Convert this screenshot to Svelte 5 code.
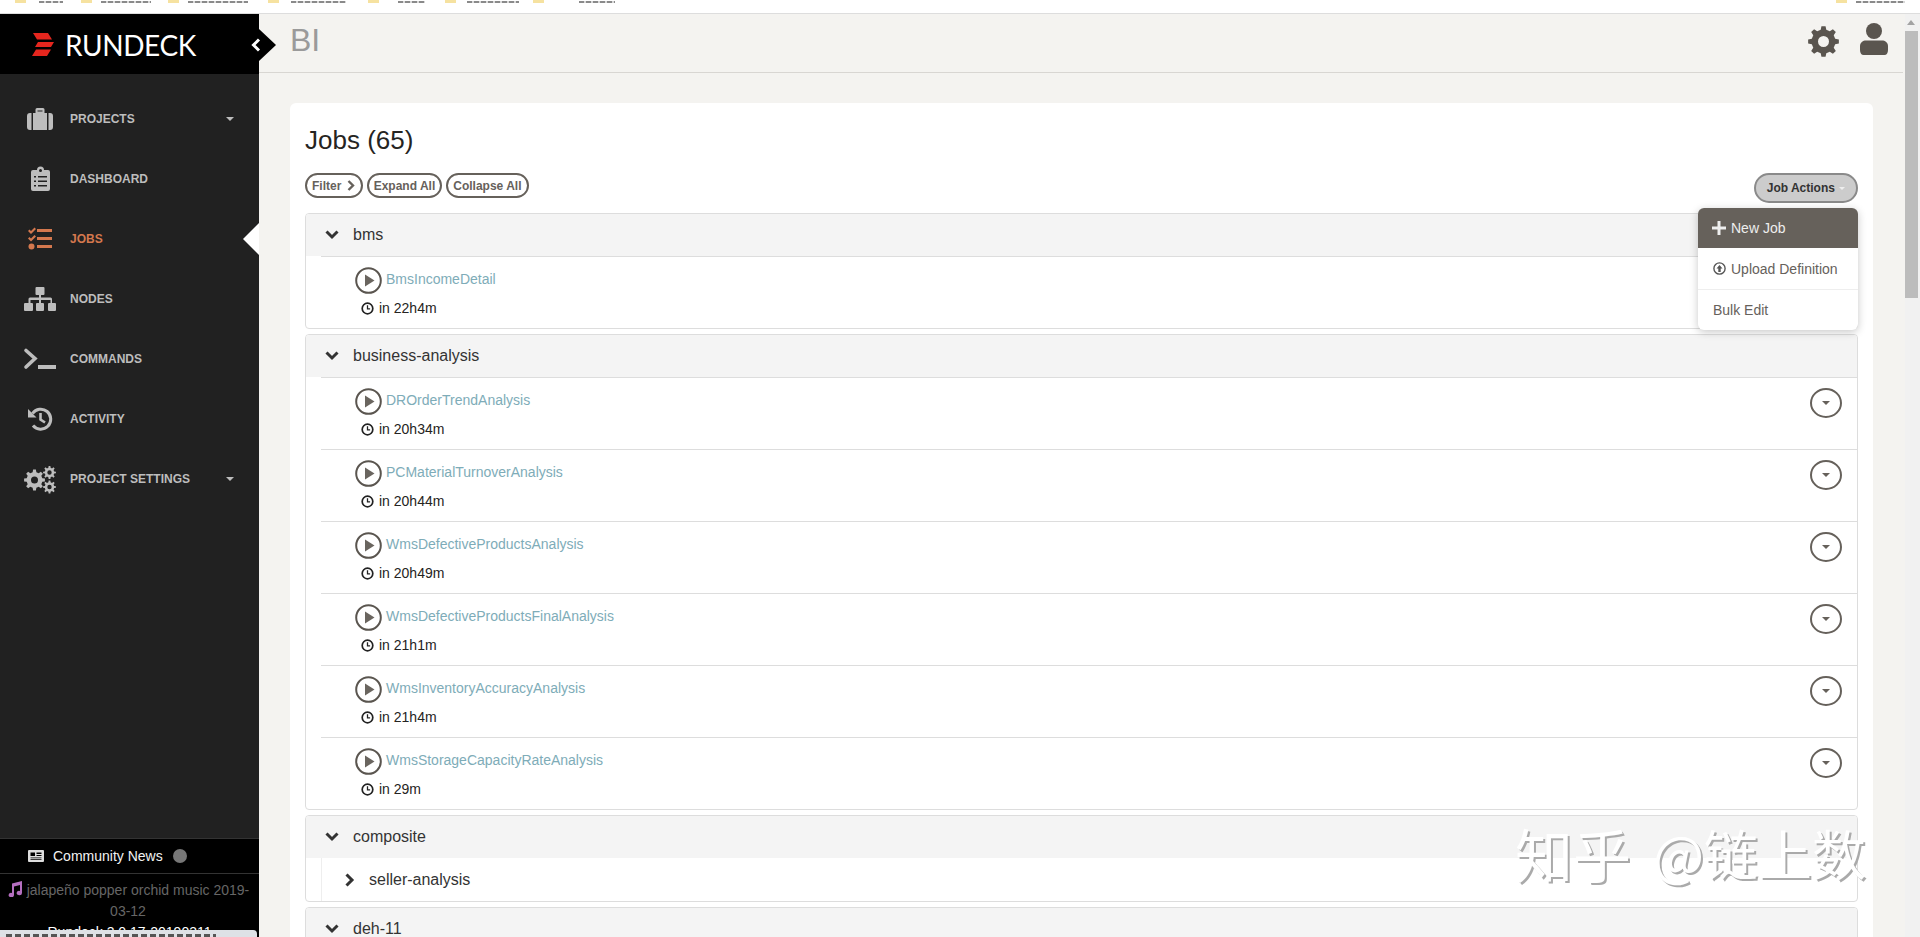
<script>
  const nav = [
    { label: 'PROJECTS', icon: 'briefcase', caret: true },
    { label: 'DASHBOARD', icon: 'clipboard' },
    { label: 'JOBS', icon: 'tasks', active: true },
    { label: 'NODES', icon: 'tree' },
    { label: 'COMMANDS', icon: 'terminal' },
    { label: 'ACTIVITY', icon: 'history' },
    { label: 'PROJECT SETTINGS', icon: 'cogs', caret: true }
  ]

  const groups = [
    { name: 'bms', jobs: [['BmsIncomeDetail', 'in 22h4m']] },
    {
      name: 'business-analysis',
      jobs: [
        ['DROrderTrendAnalysis', 'in 20h34m'],
        ['PCMaterialTurnoverAnalysis', 'in 20h44m'],
        ['WmsDefectiveProductsAnalysis', 'in 20h49m'],
        ['WmsDefectiveProductsFinalAnalysis', 'in 21h1m'],
        ['WmsInventoryAccuracyAnalysis', 'in 21h4m'],
        ['WmsStorageCapacityRateAnalysis', 'in 29m']
      ]
    },
    { name: 'composite', jobs: [], sub: 'seller-analysis' },
    { name: 'deh-11', jobs: [] }
  ]

  const bookmarks = [
    { x: 15, gap: 13, w: 24 }, { x: 81, gap: 9, w: 50 }, { x: 168, gap: 9, w: 60 },
    { x: 268, gap: 12, w: 55 }, { x: 368, gap: 19, w: 27 }, { x: 445, gap: 11, w: 52 },
    { x: 533, gap: 35, w: 36 }, { x: 1836, gap: 9, w: 49 }
  ]

  // cog outline with a round hole, teeth evenly spread
  function gear(cx, cy, outer, inner, hole, teeth) {
    const step = (Math.PI * 2) / teeth
    const pt = (r, a) => `${(cx + r * Math.cos(a)).toFixed(2)} ${(cy + r * Math.sin(a)).toFixed(2)}`
    let d = ''
    for (let i = 0; i < teeth; i++) {
      const a = i * step - Math.PI / 2
      d += `${i ? 'L' : 'M'}${pt(inner, a - step * 0.3)}L${pt(outer, a - step * 0.17)}L${pt(outer, a + step * 0.17)}L${pt(inner, a + step * 0.3)}`
    }
    d += `ZM${cx - hole} ${cy}a${hole} ${hole} 0 1 0 ${hole * 2} 0a${hole} ${hole} 0 1 0 ${-hole * 2} 0Z`
    return d
  }
</script>

<div class="page">
  <div class="bookmarks">
    {#each bookmarks as b}
      <span class="bookmark" style="left:{b.x}px; gap:{b.gap}px">
        <i class="folder"></i><i class="label" style="width:{b.w}px"></i>
      </span>
    {/each}
  </div>

  <div class="shell">
    <aside class="sidebar">
      <div class="logo">
        <svg class="mark" width="22" height="23" viewBox="0 0 22 23">
          <path d="M1 0h15l4 6.500H5zM6 9h16l-3 5H3zM4 16.500h15L15 23H0z" fill="#e5261e" />
        </svg>
        <span class="wordmark">RUNDECK</span>
        <span class="collapse">
          <svg width="12" height="16" viewBox="0 0 12 16">
            <path d="M9 2.500 3.500 8 9 13.500" fill="none" stroke="#fff" stroke-width="3" />
          </svg>
        </span>
      </div>

      <nav class="nav">
        {#each nav as item}
          <div class="nav-item" class:active={item.active}>
            <svg class="nav-icon" width="34" height="30" viewBox="0 0 34 30" fill="currentColor">
              {#if item.icon === 'briefcase'}
                <path d="M7 9h1.500v17H7a3 3 0 0 1-3-3V12a3 3 0 0 1 3-3zM25.500 9H27a3 3 0 0 1 3 3v11a3 3 0 0 1-3 3h-1.500z" />
                <path fill-rule="evenodd" d="M10 9h2.500V5.500A1.500 1.500 0 0 1 14 4h6a1.500 1.500 0 0 1 1.500 1.500V9H24v17H10zM14.500 6.500v1h5v-1z" />
              {:else if item.icon === 'clipboard'}
                <path fill-rule="evenodd" d="M10 6h4a3.500 3.500 0 0 1 7 0h4a2 2 0 0 1 2 2v17a2 2 0 0 1-2 2H10a2 2 0 0 1-2-2V8a2 2 0 0 1 2-2zM16 6.500a1.500 1.500 0 1 0 3 0 1.500 1.500 0 0 0-3 0zM11 12v1.500h2V12zm4 0v1.500h9V12zm-4 4.500V18h2v-1.500zm4 0V18h9v-1.500zM11 21v1.500h2V21zm4 0v1.500h9V21z" />
              {:else if item.icon === 'tasks'}
                <path d="M5 7l1.500-1.500L8 7l3.500-3.500L13 5l-5 5zM5 14.500 6.500 13 8 14.500l3.500-3.500 1.500 1.500-5 5zM14 5h15v3H14zM14 13h15v3H14zM14 21h15v3H14z" />
                <circle cx="8.500" cy="22.500" r="3" />
              {:else if item.icon === 'tree'}
                <path d="M13.500 3h7a1 1 0 0 1 1 1v6a1 1 0 0 1-1 1H18v2.500h9.500a1.500 1.500 0 0 1 1.500 1.500v4h3a1 1 0 0 1 1 1v6a1 1 0 0 1-1 1h-6a1 1 0 0 1-1-1v-6a1 1 0 0 1 1-1h1.500v-3H18v3h2a1 1 0 0 1 1 1v6a1 1 0 0 1-1 1h-6a1 1 0 0 1-1-1v-6a1 1 0 0 1 1-1h2v-3H7.500v3H9a1 1 0 0 1 1 1v6a1 1 0 0 1-1 1H2a1 1 0 0 1-1-1v-6a1 1 0 0 1 1-1h3.500v-4A1.500 1.500 0 0 1 7 13.500h9V11h-2.500a1 1 0 0 1-1-1V4a1 1 0 0 1 1-1z" />
              {:else if item.icon === 'terminal'}
                <path d="M3 6.500 12 14.500 3 23" fill="none" stroke="currentColor" stroke-width="3.600" stroke-linecap="round" />
                <path d="M15 21h18v4H15z" />
              {:else if item.icon === 'history'}
                <path d="M9.500 9.500A10 10 0 1 1 10 21.500" fill="none" stroke="currentColor" stroke-width="3" />
                <path d="M5 5v8.500h8.500z" />
                <path d="M17.500 9v6.500l4.500 3" fill="none" stroke="currentColor" stroke-width="2.600" />
              {:else if item.icon === 'cogs'}
                <path fill-rule="evenodd" d={gear(11.5, 16, 10.5, 8, 3.5, 8)} />
                <path fill-rule="evenodd" d={gear(26.5, 8.500, 6.5, 4.8, 2.2, 8)} />
                <path fill-rule="evenodd" d={gear(26.5, 23, 6.5, 4.8, 2.2, 8)} />
              {/if}
            </svg>
            <span class="nav-label">{item.label}</span>
            {#if item.caret}<i class="nav-caret"></i>{/if}
            {#if item.active}<i class="nav-notch"></i>{/if}
          </div>
        {/each}
      </nav>

      <div class="foot">
        <div class="news">
          <svg width="16" height="12" viewBox="0 0 16 12">
            <path fill-rule="evenodd" d="M1 0h14a1 1 0 0 1 1 1v10a1 1 0 0 1-1 1H1a1 1 0 0 1-1-1V1a1 1 0 0 1 1-1zm1.500 2.500v3.500H7V2.500zm6 0V4h5V2.500zm0 2.500v1h5V5zm-6 2.500v.800h11v-.800zm0 1.800v.700h11v-.700z" fill="#ddd" />
          </svg>
          <span>Community News</span>
          <i class="news-dot"></i>
        </div>
        <div class="release">
          <svg width="16" height="16" viewBox="0 0 16 16">
            <path d="M5 2.500 15 0v12a2.700 2.200 0 1 1-2-2.100V4L7 5.500V14a2.700 2.200 0 1 1-2-2.100z" fill="#b56fc0" />
          </svg>
          jalapeño popper orchid music 2019-03-12
        </div>
        <div class="version">Rundeck 3.0.17-20190311</div>
      </div>
    </aside>

    <main class="main">
      <header class="topbar">
        <h1>BI</h1>
        <div class="top-icons">
          <svg class="top-gear" width="31" height="31" viewBox="0 0 31 31">
            <path fill="#5a554f" fill-rule="evenodd" d={gear(15.5, 15.5, 15.5, 12, 5.5, 8)} />
          </svg>
          <svg width="28" height="32" viewBox="0 0 28 32">
            <circle cx="14" cy="8" r="8" fill="#5a554f" />
            <path d="M0 27v-4c0-3.500 3-5.500 6-5.500h16c3 0 6 2 6 5.500v4c0 3-1.500 5-3.500 5h-21C1.500 32 0 30 0 27z" fill="#5a554f" />
          </svg>
        </div>
      </header>

      <section class="card">
        <h2>Jobs (65)</h2>
        <div class="toolbar">
          <button class="pill">Filter <svg class="filter-chev" width="8" height="11" viewBox="0 0 8 11"><path d="M1.500 1 6 5.500 1.500 10" fill="none" stroke="#66615b" stroke-width="2.400" /></svg></button>
          <button class="pill">Expand All</button>
          <button class="pill">Collapse All</button>
          <div class="actions">
            <button class="pill action-btn">Job Actions <i class="action-caret"></i></button>
            <div class="menu">
              <div class="menu-item primary">
                <svg class="plus" width="14" height="14" viewBox="0 0 14 14"><path d="M5.500 0h3v5.500H14v3H8.500V14h-3V8.500H0v-3h5.500z" fill="#eee" /></svg>
                New Job
              </div>
              <div class="menu-item">
                <svg width="13" height="13" viewBox="0 0 13 13">
                  <circle cx="6.500" cy="6.500" r="5.600" fill="none" stroke="#555" stroke-width="1.400" />
                  <path d="M6.500 3 9.500 6.500H7.700V10H5.300V6.500H3.500z" fill="#555" />
                </svg>
                Upload Definition
              </div>
              <div class="menu-item">Bulk Edit</div>
            </div>
          </div>
        </div>

        {#each groups as group}
          <div class="group">
            <div class="group-head">
              <svg class="chev" width="14" height="10" viewBox="0 0 14 10"><path d="M1.500 1.500 7 7l5.500-5.500" fill="none" stroke="#333" stroke-width="3" /></svg>
              <span>{group.name}</span>
            </div>
            {#each group.jobs as job}
              <div class="job">
                <div class="job-text">
                  <div class="job-title">
                    <svg width="27" height="27" viewBox="0 0 27 27">
                      <circle cx="13.500" cy="13.500" r="12.300" fill="none" stroke="#5a554f" stroke-width="2" />
                      <path d="M10 7.500 19.500 13.500 10 19.500z" fill="#6a655f" />
                    </svg>
                    <span class="job-link">{job[0]}</span>
                  </div>
                  <div class="job-time">
                    <svg width="13" height="13" viewBox="0 0 13 13">
                      <circle cx="6.500" cy="6.500" r="5.300" fill="none" stroke="#222" stroke-width="1.700" />
                      <path d="M6.500 3.200v3.600h2.600" fill="none" stroke="#222" stroke-width="1.300" />
                    </svg>
                    {job[1]}
                  </div>
                </div>
                <button class="job-menu"><i></i></button>
              </div>
            {/each}
            {#if group.sub}
              <div class="sub">
                <svg width="10" height="14" viewBox="0 0 10 14"><path d="M1.500 1.500 7 7l-5.500 5.500" fill="none" stroke="#333" stroke-width="3" /></svg>
                <span>{group.sub}</span>
              </div>
            {/if}
          </div>
        {/each}
      </section>

      <div class="watermark"><span class="wm-a">知乎</span><span class="wm-at">@</span><span class="wm-b">链上数</span></div>
    </main>

    <div class="scrollbar">
      <i class="scroll-up"></i>
      <i class="scroll-thumb"></i>
    </div>
  </div>

  <div class="status"><i></i></div>
</div>

<style>
  :global(body) {
    margin: 0;
    background: #fff;
    font-family: 'Liberation Sans', Arial, sans-serif;
    overflow: hidden;
  }

  :global(*) {
    box-sizing: border-box;
  }

  .page {
    position: relative;
    height: 937px;
    overflow: hidden;
    display: flex;
    flex-direction: column;
  }

  .bookmarks {
    position: relative;
    flex: 0 0 14px;
    border-bottom: 1px solid #ddd;
    overflow: hidden;
    background: #fff;
  }

  .bookmark {
    position: absolute;
    top: -10px;
    display: flex;
    align-items: flex-end;
    height: 13px;
  }

  .folder {
    display: block;
    width: 11px;
    height: 13px;
    background: #f6e2a0;
  }

  .label {
    display: block;
    height: 2px;
    background: repeating-linear-gradient(90deg, #8a8a8a 0 5px, #d8d8d8 5px 7px);
  }

  .shell {
    flex: 1;
    display: flex;
    min-height: 0;
    background: #f4f3f0;
  }

  .sidebar {
    position: relative;
    flex: 0 0 259px;
    display: flex;
    flex-direction: column;
    background: #212121;
    z-index: 2;
  }

  .logo {
    position: relative;
    flex: 0 0 60px;
    display: flex;
    align-items: center;
    padding-left: 32px;
    background: #000;
    color: #fff;
  }

  .mark {
    margin-right: 11px;
  }

  .wordmark {
    font-family: Lato, sans-serif;
    font-size: 28px;
    letter-spacing: -0.4px;
    line-height: 1;
    margin-top: 2px;
  }

  .collapse {
    position: absolute;
    left: 259px;
    top: 15px;
    width: 0;
    height: 0;
    border-style: solid;
    border-width: 16px 0 16px 17px;
    border-color: transparent transparent transparent #000;
  }

  .collapse svg {
    position: absolute;
    left: -26px;
    top: -8px;
  }

  .nav {
    flex: 1;
    min-height: 0;
    padding-top: 15px;
  }

  .nav-item {
    position: relative;
    height: 60px;
    display: flex;
    align-items: center;
    color: #bdbdbd;
    padding-left: 23px;
  }

  .nav-item.active {
    color: #d4784e;
  }

  .nav-icon {
    flex: 0 0 34px;
  }

  .nav-label {
    margin-left: 13px;
    font-size: 12px;
    font-weight: 700;
  }

  .nav-caret {
    position: absolute;
    left: 226px;
    top: 28px;
    border-style: solid;
    border-width: 4px 4px 0;
    border-color: #bdbdbd transparent transparent;
  }

  .nav-notch {
    position: absolute;
    right: 0;
    top: 14px;
    border-style: solid;
    border-width: 16px 16px 16px 0;
    border-color: transparent #fff transparent transparent;
  }

  .foot {
    flex: 0 0 99px;
    background: #000;
    color: #fff;
    overflow: hidden;
    border-top: 1px solid #333;
  }

  .news {
    height: 35px;
    display: flex;
    align-items: center;
    gap: 9px;
    padding-left: 28px;
    font-size: 14px;
    color: #f2f2f2;
    border-bottom: 1px solid #333;
  }

  .news-dot {
    width: 14px;
    height: 14px;
    border-radius: 50%;
    background: #777;
    margin-left: 1px;
  }

  .release {
    margin-top: 6px;
    padding: 0 6px 0 3px;
    text-align: center;
    font-size: 14px;
    line-height: 21px;
    color: #666;
  }

  .release svg {
    vertical-align: -2px;
  }

  .version {
    text-align: center;
    font-size: 14px;
    line-height: 20px;
    color: #fff;
  }

  .main {
    position: relative;
    flex: 1;
    min-width: 0;
    overflow: hidden;
  }

  .topbar {
    height: 59px;
    margin-right: 2px;
    border-bottom: 1px solid #d8d6d2;
    display: flex;
    align-items: center;
    justify-content: space-between;
    padding: 0 15px 6px 31px;
  }

  h1 {
    margin: 0;
    font-size: 32px;
    font-weight: 400;
    color: #9a9a9a;
  }

  .top-icons {
    display: flex;
    align-items: flex-start;
    gap: 21px;
  }

  .top-gear {
    margin-top: 3px;
  }

  .card {
    margin: 30px 32px 0 31px;
    padding: 18px 15px 0;
    background: #fff;
    border-radius: 6px;
    height: 900px;
  }

  h2 {
    margin: 0;
    font-size: 26px;
    line-height: 38px;
    font-weight: 400;
    color: #252422;
  }

  .toolbar {
    position: relative;
    display: flex;
    align-items: flex-start;
    gap: 4px;
    margin-top: 14px;
    height: 40px;
  }

  .pill {
    height: 25px;
    padding: 0 5px;
    border: 2px solid #66615b;
    border-radius: 13px;
    background: #fff;
    color: #66615b;
    font: 700 12px 'Liberation Sans', sans-serif;
    white-space: nowrap;
  }

  .filter-chev {
    margin: 0 1px 0 2px;
    vertical-align: -1px;
  }

  .actions {
    position: absolute;
    right: 0;
    top: 0;
    width: 160px;
    display: flex;
    flex-direction: column;
    align-items: flex-end;
    z-index: 3;
  }

  .action-btn {
    height: 30px;
    width: 104px;
    border-radius: 15px;
    border-color: #8a8a8a;
    background: #ccc;
    color: #333;
  }

  .action-caret {
    display: inline-block;
    vertical-align: 2px;
    margin-left: 1px;
    border-style: solid;
    border-width: 3px 3px 0;
    border-color: #eee transparent transparent;
  }

  .menu {
    margin-top: 5px;
    width: 160px;
    background: #fff;
    border-radius: 6px;
    box-shadow: 0 2px 8px rgba(0, 0, 0, 0.22);
    overflow: hidden;
  }

  .menu-item {
    height: 41px;
    display: flex;
    align-items: center;
    gap: 5px;
    padding-left: 15px;
    font-size: 14px;
    color: #66615b;
  }

  .menu-item + .menu-item + .menu-item {
    border-top: 1px solid #eee;
  }

  .menu-item.primary {
    height: 40px;
    background: #66615b;
    color: #eee;
  }

  .plus {
    margin-left: -1px;
  }

  .group {
    border: 1px solid #ddd;
    border-radius: 4px;
    margin-bottom: 5px;
    overflow: hidden;
  }

  .group-head {
    height: 42px;
    display: flex;
    align-items: center;
    gap: 14px;
    padding-left: 19px;
    background: #f4f4f4;
    font-size: 16px;
    color: #333;
  }

  .job {
    height: 72px;
    margin-left: 15px;
    border-top: 1px solid #ddd;
    display: flex;
    justify-content: space-between;
    align-items: flex-start;
    padding-top: 10px;
  }

  .job-text {
    padding-left: 34px;
  }

  .job-title {
    display: flex;
    align-items: center;
    gap: 4px;
    height: 27px;
  }

  .job-link {
    margin-top: -3px;
    font-size: 14px;
    color: #7eacb8;
  }

  .job-time {
    display: flex;
    align-items: center;
    gap: 5px;
    margin: 6px 0 0 6px;
    height: 16px;
    font-size: 14px;
    color: #252422;
  }

  .job-menu {
    width: 32px;
    height: 30px;
    margin-right: 15px;
    padding: 0;
    border: 2px solid #66615b;
    border-radius: 50%;
    background: #fff;
    display: flex;
    align-items: center;
    justify-content: center;
  }

  .job-menu i {
    border-style: solid;
    border-width: 4px 4px 0;
    border-color: #66615b transparent transparent;
  }

  .sub {
    height: 43px;
    margin-left: 15px;
    border-left: 1px solid #eee;
    display: flex;
    align-items: center;
    gap: 14px;
    padding-left: 23px;
    font-size: 16px;
    color: #333;
  }

  .watermark {
    position: absolute;
    left: 1256px;
    top: 809px;
    display: flex;
    align-items: center;
    height: 60px;
    font-family: 'Noto Sans CJK SC', sans-serif;
    line-height: 60px;
    color: #fff;
    text-shadow: 2px 2px 0 #aaa;
    white-space: nowrap;
    pointer-events: none;
    z-index: 4;
  }

  .wm-a {
    font-size: 58px;
  }

  .wm-at {
    margin-left: 22px;
    font-size: 54px;
  }

  .wm-b {
    font-size: 54px;
  }

  .scrollbar {
    position: relative;
    flex: 0 0 15px;
    background: #f1f1f1;
  }

  .scroll-up {
    position: absolute;
    left: 2px;
    top: 6px;
    border-style: solid;
    border-width: 0 4px 5px;
    border-color: transparent transparent #a3a3a3;
  }

  .scroll-thumb {
    position: absolute;
    left: 0;
    top: 17px;
    width: 13px;
    height: 267px;
    background: #bcbcbc;
  }

  .status {
    position: absolute;
    left: 0;
    bottom: 0;
    width: 257px;
    height: 7px;
    padding: 4px 0 0 6px;
    background: #dee1e6;
    border-radius: 0 4px 0 0;
    z-index: 5;
  }

  .status i {
    display: block;
    width: 210px;
    height: 3px;
    background: repeating-linear-gradient(90deg, #555 0 6px, #dee1e6 6px 9px);
  }
</style>
